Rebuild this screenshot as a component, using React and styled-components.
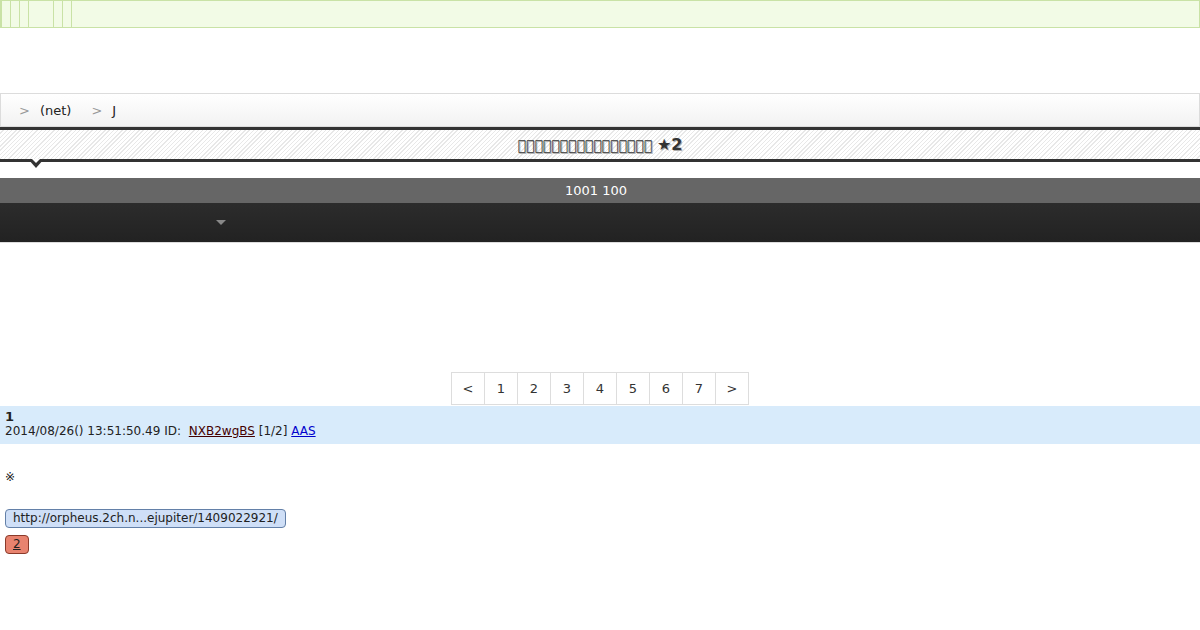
import React from 'react';
import styled, { createGlobalStyle } from 'styled-components';

const GlobalStyle = createGlobalStyle`
    html, body {
        margin: 0;
        padding: 0;
        background: #fff;
        font-family: "DejaVu Sans", "Noto Sans CJK JP", sans-serif;
        font-size: 12px;
        color: #222;
    }
`;

const TopNav = styled.ul`
    display: flex;
    height: 26px;
    margin: 0;
    padding: 0;
    list-style: none;
    background: #f2fbe6;
    border: 1px solid #c9e2a6;
`;

const TopNavItem = styled.li`
    width: ${({ w }) => w}px;
    border-right: 1px solid #c9e2a6;
    &:first-child {
        border-left: 1px solid #c9e2a6;
    }
`;

const Breadcrumb = styled.div`
    display: flex;
    align-items: center;
    gap: 20px;
    margin-top: 65px;
    height: 32px;
    padding: 0 18px;
    border: 1px solid #dcdcdc;
    background: linear-gradient(#ffffff, #f2f2f2);
    font-size: 13px;
`;

const Crumb = styled.span`
    display: flex;
    gap: 10px;
    &::before {
        content: ">";
        color: #999;
    }
`;

const TitleBar = styled.div`
    position: relative;
    height: 29px;
    display: flex;
    align-items: center;
    justify-content: center;
    border-top: 3px solid #333;
    border-bottom: 3px solid #333;
    background: repeating-linear-gradient(-45deg, #fff 0 2px, #e8e8e8 2px 3px);
    &::before, &::after {
        content: "";
        position: absolute;
        left: 28px;
        top: 100%;
        border-left: 8px solid transparent;
        border-right: 8px solid transparent;
        border-top: 9px solid #333;
    }
    &::after {
        left: 32px;
        border-left-width: 4px;
        border-right-width: 4px;
        border-top: 4px solid #fff;
    }
`;

const Title = styled.h1`
    margin: 0;
    font-size: 14px;
    font-weight: bold;
    color: #333;
    text-shadow: 1px 1px 0 #aaa;
`;

const TitleMark = styled.span`
    font-size: 16px;
`;

const CountBar = styled.div`
    margin-top: 16px;
    height: 25px;
    line-height: 25px;
    padding-right: 8px;
    text-align: center;
    background: #666;
    color: #fff;
    font-size: 13px;
`;

const ToolBar = styled.div`
    height: 39px;
    display: flex;
    align-items: center;
    padding-left: 216px;
    background: linear-gradient(#2c2c2c, #222);
    border-bottom: 1px solid #ddd;
`;

const Caret = styled.span`
    width: 0;
    height: 0;
    border-left: 5px solid transparent;
    border-right: 5px solid transparent;
    border-top: 5px solid #888;
`;

const Pager = styled.ul`
    display: flex;
    justify-content: center;
    margin: 129px 0 0;
    padding: 0;
    list-style: none;
`;

const PageItem = styled.li`
    width: 32px;
    height: 31px;
    line-height: 31px;
    text-align: center;
    border: 1px solid #ddd;
    border-left-width: ${({ first }) => (first ? 1 : 0)}px;
    background: #fff;
    color: #333;
    font-size: 13px;
`;

const PostHead = styled.div`
    margin-top: 1px;
    padding: 4px 5px 6px;
    background: #d8ebfb;
    line-height: 14px;
`;

const PostNum = styled.div`
    font-weight: bold;
    font-size: 13px;
`;

const IdLink = styled.span`
    color: #400;
    text-decoration: underline;
    margin-left: 4px;
`;

const BlueLink = styled.span`
    color: #00c;
    text-decoration: underline;
`;

const PostBody = styled.div`
    padding: 26px 5px 0;
    display: flex;
    flex-direction: column;
    align-items: flex-start;
    gap: 7px;
`;

const Note = styled.div`
    line-height: 14px;
    margin-bottom: 18px;
`;

const Pill = styled.span`
    display: block;
    box-sizing: border-box;
    height: 19px;
    line-height: 17px;
    padding: 0 7px;
    border-radius: 4px;
    background: ${({ red }) => (red ? '#e8836f' : '#cfdff7')};
    border: 1px solid ${({ red }) => (red ? '#8a3a2a' : '#6380a8')};
    text-decoration: ${({ red }) => (red ? 'underline' : 'none')};
`;

const navWidths = [8, 8, 8, 24, 8, 8];
const pages = ['<', '1', '2', '3', '4', '5', '6', '7', '>'];

const App = () => (
    <>
        <GlobalStyle />
        <TopNav>
            {navWidths.map((w, i) => (
                <TopNavItem key={i} w={w} />
            ))}
        </TopNav>
        <Breadcrumb>
            <Crumb>(net)</Crumb>
            <Crumb>J</Crumb>
        </Breadcrumb>
        <TitleBar>
            <Title>
                {'\uE000\uE001\uE002\uE003\uE004\uE005\uE006\uE007\uE008\uE009\uE00A\uE00B\uE00C\uE00D\uE00E\uE00F'}{' '}
                <TitleMark>★2</TitleMark>
            </Title>
        </TitleBar>
        <CountBar>1001 100</CountBar>
        <ToolBar>
            <Caret />
        </ToolBar>
        <Pager>
            {pages.map((p, i) => (
                <PageItem key={i} first={i === 0}>{p}</PageItem>
            ))}
        </Pager>
        <PostHead>
            <PostNum>1</PostNum>
            <div>
                2014/08/26() 13:51:50.49 ID: <IdLink>NXB2wgBS</IdLink> [1/2] <BlueLink>AAS</BlueLink>
            </div>
        </PostHead>
        <PostBody>
            <Note>※</Note>
            <Pill>http://orpheus.2ch.n...ejupiter/1409022921/</Pill>
            <Pill red>2</Pill>
        </PostBody>
    </>
);

export default App;
